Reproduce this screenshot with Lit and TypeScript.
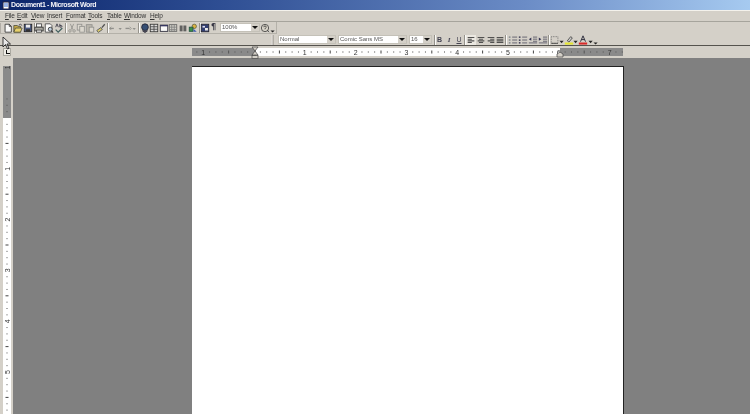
import { LitElement, html, css, svg, nothing } from "lit";
import { customElement } from "lit/decorators.js";

type Item = { k: string; x: number; w: number; t?: string };

const G = "#8a8a86";
const icons: Record<string, unknown> = {
  new: svg`<path d="M2.5 1.5h5l2.5 2.5v7h-7.5z" fill="#fff" stroke="#222"/><path d="M7.5 1.5v2.5h2.5" fill="none" stroke="#222"/>`,
  open: svg`<path d="M1 3h4l1 1h3v7H1z" fill="#c8a838" stroke="#443"/><path d="M3 6h8l-2 5H1z" fill="#e8d060" stroke="#443"/><path d="M7 2.5l2-1 2 1.5" fill="none" stroke="#223" />`,
  save: svg`<rect x="1.5" y="1.5" width="9" height="9" fill="#3c4c78" stroke="#111"/><rect x="3.5" y="2" width="5" height="3.5" fill="#eee"/><rect x="3.5" y="7.5" width="5" height="3" fill="#222"/>`,
  print: svg`<rect x="3" y="1" width="6" height="4" fill="#fff" stroke="#333"/><rect x="1" y="5" width="10" height="4.5" fill="#a8a8a0" stroke="#222"/><rect x="3" y="8.5" width="6" height="2.5" fill="#fff" stroke="#333"/>`,
  preview: svg`<path d="M1.5 1h6l2 2v8h-8z" fill="#fff" stroke="#333"/><circle cx="7.5" cy="7.5" r="2.4" fill="#bcd" stroke="#222"/><path d="M9 9.5l2 2" stroke="#222" stroke-width="1.4"/>`,
  spell: svg`<path d="M2 5l1.6-4 1.6 4M7 1v4h1.6a1 1 0 0 0 0-2H7" fill="none" stroke="#223" /><path d="M2 8l3 3 5-5" fill="none" stroke="#355" stroke-width="1.5"/>`,
  cut: svg`<path d="M4 1l3 7M8 1L5 8" stroke="${G}" fill="none"/><circle cx="3.5" cy="9.5" r="1.5" fill="none" stroke="${G}"/><circle cx="8.5" cy="9.5" r="1.5" fill="none" stroke="${G}"/>`,
  copy: svg`<rect x="1.5" y="1.5" width="5.5" height="7" fill="#ddd9d0" stroke="${G}"/><rect x="4.5" y="4" width="5.5" height="7" fill="#ddd9d0" stroke="${G}"/>`,
  paste: svg`<rect x="1.5" y="2" width="7" height="9" fill="#b8b4aa" stroke="${G}"/><rect x="5" y="5" width="5.5" height="6" fill="#ddd9d0" stroke="${G}"/>`,
  painter: svg`<rect x="1" y="7" width="6" height="3" transform="rotate(-35 4 8)" fill="#d8c860" stroke="#555"/><path d="M7 5.5L10.5 1.5" stroke="#444" stroke-width="1.6"/>`,
  undo: svg`<path d="M2 6.5h5" stroke="${G}" stroke-width="1.6"/><path d="M4 4.5l-2 2 2 2" fill="none" stroke="${G}"/>`,
  redo: svg`<path d="M3 6.5h5" stroke="${G}" stroke-width="1.6"/><path d="M8 4.5l2 2-2 2" fill="none" stroke="${G}"/>`,
  arrow: svg`<path d="M3 7h5l-2.500 3z" fill="#111"/>`,
  greyarrow: svg`<path d="M3 6h4l-2 2.500z" fill="${G}"/>`,
  link: svg`<circle cx="6" cy="5" r="4" fill="#24406a" stroke="#112"/><path d="M3 9l3 2 3-2" fill="none" stroke="#223" stroke-width="1.5"/>`,
  tables: svg`<rect x="1.5" y="1.5" width="9" height="9" fill="#ddd" stroke="#222"/><path d="M1.5 4.5h9M1.5 7.5h9M6 1.5v9" stroke="#333"/>`,
  table: svg`<rect x="1.5" y="2.5" width="9" height="7.5" fill="#fff" stroke="#112"/><rect x="1.5" y="2.5" width="9" height="1.5" fill="#225"/>`,
  excel: svg`<rect x="1.5" y="2" width="9" height="8" fill="#d0d0c8" stroke="#555"/><path d="M1.5 5h9M1.5 8h9M4.5 2v8M7.5 2v8" stroke="#777"/>`,
  cols: svg`<rect x="2" y="3" width="3.5" height="7" fill="#555"/><rect x="6.5" y="3" width="3.5" height="7" fill="#555"/>`,
  draw: svg`<circle cx="7.5" cy="4" r="2.6" fill="#e0b030" stroke="#553"/><rect x="1.5" y="5" width="4.5" height="5" fill="#2a8a3a" stroke="#143"/><path d="M6.5 7l4 3.5h-4z" fill="#3050b0"/>`,
  docmap: svg`<rect x="1.5" y="1.5" width="9" height="9" fill="#22306a" stroke="#112"/><rect x="3" y="3.5" width="3" height="2" fill="#dde"/><rect x="6" y="6" width="3.5" height="3" fill="#eee"/>`,
  help: svg`<circle cx="6" cy="6" r="4.4" fill="#d8d4c8" stroke="#333"/><path d="M4.5 5c0-2 3-2 3 0 0 1-1.500 1-1.500 2.500" fill="none" stroke="#222"/><path d="M8.500 8.500l2.500 2.500" stroke="#333"/>`,
  more: svg`<path d="M3 9h5l-2.500 2.500z" fill="#111"/>`,
  grip: svg`<path d="M1.500 0v12" stroke="#fff"/><path d="M2.500 0v12" stroke="#85827a"/>`,
  left: svg`<rect x="0" y="0" width="12" height="12" fill="#eeebe4"/><path d="M2 3h8M2 5h5M2 7h8M2 9h5" stroke="#444" stroke-width="1.300"/>`,
  center: svg`<path d="M2 3h8M3.500 5h5M2 7h8M3.500 9h5" stroke="#444" stroke-width="1.300"/>`,
  right: svg`<path d="M2 3h8M5 5h5M2 7h8M5 9h5" stroke="#444" stroke-width="1.300"/>`,
  just: svg`<path d="M2 3h8M2 5h8M2 7h8M2 9h8" stroke="#444" stroke-width="1.300"/>`,
  numb: svg`<path d="M1 2.500h2M1 6h2M1 9.500h2" stroke="#345"/><path d="M5 2.500h6M5 6h6M5 9.500h6" stroke="#445"/>`,
  bull: svg`<path d="M1 2.500h2M1 6h2M1 9.500h2" stroke="#113" stroke-width="1.500"/><path d="M5 2.500h6M5 6h6M5 9.500h6" stroke="#445"/>`,
  outdent: svg`<path d="M6 2.500h5M6 5h5M6 7.500h5M1 9.500h10" stroke="#445"/><path d="M4 3L1 5l3 2z" fill="#224"/>`,
  indent: svg`<path d="M6 2.500h5M6 5h5M6 7.500h5M1 9.500h10" stroke="#445"/><path d="M1 3l3 2-3 2z" fill="#224"/>`,
  border: svg`<rect x="1.500" y="2" width="8" height="8" fill="none" stroke="#555" stroke-dasharray="1 1"/><path d="M1.500 10h8" stroke="#333"/>`,
  high: svg`<path d="M4 7l4-5 2 1.500-4 5z" fill="#ccc" stroke="#333"/><rect x="1" y="9" width="10" height="2.500" fill="#e6e820"/>`,
  color: svg`<path d="M3 8l3-7 3 7M4.200 5.500h3.600" fill="none" stroke="#223" stroke-width="1.200"/><rect x="1" y="9" width="10" height="2.500" fill="#d81818"/>`,
};

const standard: Item[] = [
  { k: "grip", x: 3, w: 4 },
  { k: "new", x: 8, w: 10 }, { k: "open", x: 17.5, w: 10 }, { k: "save", x: 27.5, w: 10 },
  { k: "sep", x: 34.5, w: 2 },
  { k: "print", x: 39, w: 10 }, { k: "preview", x: 49, w: 10 }, { k: "spell", x: 58.5, w: 10 },
  { k: "sep", x: 65.5, w: 2 },
  { k: "cut", x: 71.5, w: 10 }, { k: "copy", x: 80.5, w: 10 }, { k: "paste", x: 90, w: 10 }, { k: "painter", x: 101, w: 10 },
  { k: "sep", x: 107.5, w: 2 },
  { k: "undo", x: 113, w: 10 }, { k: "greyarrow", x: 121, w: 6 }, { k: "redo", x: 128, w: 8 }, { k: "greyarrow", x: 135, w: 6 },
  { k: "sep", x: 138.5, w: 1 },
  { k: "link", x: 144.5, w: 10 }, { k: "tables", x: 154, w: 9 }, { k: "table", x: 163.5, w: 10 }, { k: "excel", x: 173, w: 9 }, { k: "cols", x: 182.5, w: 9 }, { k: "draw", x: 193, w: 10 },
  { k: "sep", x: 199.5, w: 2 },
  { k: "docmap", x: 205, w: 9 }, { k: "para", x: 213.5, w: 8 },
  { k: "combo", x: 240, w: 40, t: "100%" },
  { k: "help", x: 265, w: 10 }, { k: "more", x: 273, w: 6 },
];
const format: Item[] = [
  { k: "grip", x: 275.5, w: 4 },
  { k: "combo", x: 307, w: 58, t: "Normal" }, { k: "combo", x: 372.500, w: 69, t: "Comic Sans MS" }, { k: "combo", x: 420.500, w: 23, t: "16" },
  { k: "sep", x: 434.500, w: 2 },
  { k: "B", x: 439.500, w: 8 }, { k: "I", x: 449, w: 8 }, { k: "U", x: 459, w: 8 },
  { k: "sep", x: 464.500, w: 2 },
  { k: "left", x: 471, w: 10 }, { k: "center", x: 480.500, w: 9 }, { k: "right", x: 490.500, w: 9 }, { k: "just", x: 500, w: 9 },
  { k: "sep", x: 506, w: 2 },
  { k: "numb", x: 512.500, w: 9 }, { k: "bull", x: 522.500, w: 9 }, { k: "outdent", x: 533, w: 9 }, { k: "indent", x: 542.500, w: 9 },
  { k: "sep", x: 548.500, w: 2 },
  { k: "border", x: 554.500, w: 9 }, { k: "arrow", x: 561.500, w: 5 }, { k: "high", x: 568.500, w: 9 }, { k: "arrow", x: 576, w: 5 }, { k: "color", x: 583, w: 9 }, { k: "arrow", x: 590.500, w: 5 }, { k: "more", x: 595.500, w: 5 },
];
const menus = [
  ["F", "ile", 5], ["E", "dit", 17], ["V", "iew", 31], ["I", "nsert", 47], ["F", "ormat", 66],
  ["T", "ools", 88], ["T", "able", 107], ["W", "indow", 124], ["H", "elp", 150],
] as const;

const INCH = 50.8;

@customElement("app-root")
export class AppRoot extends LitElement {
  static styles = css`
    :host { display: block; width: 750px; height: 414px; overflow: hidden; position: relative; background: #d4d0c8; font-family: "Liberation Sans", Arial, sans-serif; color: #111; }
    .title { height: 10px; display: flex; align-items: center; gap: 1px; padding-left: 2px; background: linear-gradient(90deg, #0a246a 0%, #2f4f94 30%, #6b8cc6 70%, #a6caf0 100%); color: #f4f4f8; font-size: 7px; letter-spacing: -0.4px; font-weight: 700; line-height: 10px; white-space: nowrap; }
    .title svg { width: 8px; height: 9px; flex: none; }
    .title span { filter: blur(0.25px); }
    .hi { height: 1px; background: #f4f2ec; }
    .menu { height: 10px; display: flex; font-size: 6.5px; letter-spacing: -0.2px; line-height: 10px; color: #333; border-bottom: 1px solid #a6a49c; filter: blur(0.2px); }
    .menu span.m { white-space: nowrap; }
    .menu u { text-decoration: underline; }
    .bar { box-sizing: border-box; width: 277px; height: 12px; display: flex; align-items: center; border-bottom: 1px solid #b4b1a9; border-right: 1px solid #b4b1a9; }
    .tb2 { height: 11px; margin-top: 0; display: flex; align-items: center; }
    .dark { height: 1px; background: #55534e; }
    .it { flex: none; height: 10px; display: flex; align-items: center; justify-content: center; filter: blur(0.3px); opacity: 0.9; }
    .it svg { width: 10px; height: 10px; flex: none; display: block; }
    .sep { width: 2px; height: 10px; border-left: 1px solid #8f8c84; border-right: 1px solid #fff; box-sizing: border-box; }
    .para { font-size: 8px; font-weight: 700; color: #223; font-family: "DejaVu Sans", sans-serif; }
    .fmt { font-size: 7px; font-weight: 700; color: #334; }
    .fmt.i { font-style: italic; font-family: "Liberation Serif", serif; }
    .fmt.u { text-decoration: underline; font-weight: 400; }
    .combo { box-sizing: border-box; height: 9px; flex: none; background: #fff; border: 1px solid #c4c1b8; display: flex; justify-content: space-between; align-items: stretch; font-size: 6px; line-height: 7px; color: #555; padding-left: 1px; white-space: nowrap; overflow: hidden; filter: blur(0.2px); }
    .combo b { flex: none; width: 8px; background: #d4d0c8; display: flex; align-items: center; justify-content: center; }
    .combo b::after { content: ""; border: 3px solid transparent; border-top-color: #111; border-bottom: 0; }
    .rulerRow { height: 12px; display: flex; position: relative; }
    .tab { width: 8px; height: 8px; margin: 2px 0 0 3px; background: #eeece6; border: 1px solid #aaa8a0; box-sizing: border-box; display: flex; }
    .tab::after { content: ""; width: 3px; height: 3px; margin: 1px 0 0 2px; border-left: 1px solid #111; border-bottom: 1px solid #111; }
    .hruler { display: block; margin: 2px 0 0 181px; overflow: visible; filter: blur(0.25px); }
    .main { height: 356px; display: flex; }
    .side { width: 13px; flex: none; padding: 8px 2px 0 3px; box-sizing: border-box; }
    .side svg { display: block; filter: blur(0.25px); }
    .work { flex: 1; background: #808080; padding: 8px 0 0 179px; }
    .page { width: 431px; height: 360px; background: #fff; border: solid #222; border-width: 1px 1px 0 0; }
    .pointer { position: absolute; left: 2px; top: 37px; width: 9px; height: 14px; }
    text { font-family: "Liberation Sans", Arial, sans-serif; }
  `;

  private row(items: Item[]) {
    let end = 0;
    return items.map((it) => {
      const left = it.x - it.w / 2;
      const m = left - end;
      end = left + it.w;
      const st = `margin-left:${m}px;width:${it.w}px`;
      if (it.k === "combo") return html`<div class="combo" style=${st}><span>${it.t}</span><b></b></div>`;
      if (it.k === "sep") return html`<div class="it" style=${st}><div class="sep"></div></div>`;
      if (it.k === "para") return html`<div class="it para" style=${st}>¶</div>`;
      if (it.k === "B" || it.k === "I" || it.k === "U")
        return html`<div class="it fmt ${it.k.toLowerCase()}" style=${st}>${it.k}</div>`;
      return html`<div class="it" style=${st}><svg viewBox="0 0 12 12">${icons[it.k] ?? nothing}</svg></div>`;
    });
  }

  private hruler() {
    const origin = 254 - 192;
    const ticks = [];
    for (let i = -10; i <= 58; i++) {
      if (i % 8 === 0) continue;
      const x = origin + (i * INCH) / 8;
      if (x < 1 || x > 431) continue;
      const c = x < origin || x > 368 ? "#555" : "#444";
      ticks.push(i % 4 === 0
        ? svg`<rect x=${x - 0.5} y="2.500" width="1" height="3" fill=${c}/>`
        : svg`<rect x=${x - 0.5} y="3.500" width="1" height="1" fill=${c}/>`);
    }
    const nums = [-1, 1, 2, 3, 4, 5, 6, 7].map((n) =>
      svg`<text x=${origin + n * INCH} y="6.500" font-size="7" text-anchor="middle" fill="#333">${Math.abs(n)}</text>`);
    return html`<svg class="hruler" width="431" height="8" viewBox="0 0 431 8">
      <rect width="431" height="8" fill="#8a8a8a"/>
      <rect x="64" width="304" height="8" fill="#fff"/>
      ${ticks}${nums}
      <path d="M60 -1h6l-3 4zM60 7l3-4 3 4z" fill="#d4d0c8" stroke="#444" stroke-width=".7"/>
      <rect x="60" y="7.500" width="6" height="3" fill="#d4d0c8" stroke="#444" stroke-width=".7"/>
      <path d="M365 9v-3l3-2 3 2v3z" fill="#d4d0c8" stroke="#444" stroke-width=".7"/>
    </svg>`;
  }

  private vruler() {
    const origin = 52;
    const ticks = [];
    for (let i = -3; i <= 48; i++) {
      if (i % 8 === 0) continue;
      const y = origin + (i * INCH) / 8;
      if (y < 1) continue;
      ticks.push(i % 4 === 0
        ? svg`<rect x="2.500" y=${y - 0.5} width="3" height="1" fill="#444"/>`
        : svg`<rect x="3.500" y=${y - 0.5} width="1" height="1" fill="#555"/>`);
    }
    const nums = [-1, 1, 2, 3, 4, 5].map((n) => {
      const y = origin + n * INCH;
      return svg`<text transform="translate(6.500 ${y}) rotate(-90)" font-size="7" text-anchor="middle" fill="#333">${Math.abs(n)}</text>`;
    });
    return html`<svg width="8" height="348" viewBox="0 0 8 348">
      <rect width="8" height="348" fill="#fff"/>
      <rect width="8" height="52" fill="#8a8a8a"/>
      ${ticks}${nums}
    </svg>`;
  }

  render() {
    return html`
      <div class="title">
        <svg viewBox="0 0 8 9"><rect x="1" y="1" width="6" height="7" fill="#fff" stroke="#224"/><path d="M2 3h4M2 5h4" stroke="#36c"/></svg>
        <span>Document1 - Microsoft Word</span>
      </div>
      <div class="hi"></div>
      <div class="menu">
        ${(() => { let end = 0; return menus.map(([a, b, x]) => {
          const m = x - end; end = x;
          return html`<span class="m" style="margin-left:${m}px;width:0"><u>${a}</u>${b}</span>`;
        }); })()}
      </div>
      <div class="bar">${this.row(standard)}</div>
      <div class="tb2">${this.row(format)}</div>
      <div class="dark"></div>
      <div class="rulerRow"><div class="tab"></div>${this.hruler()}</div>
      <div class="main">
        <div class="side">${this.vruler()}</div>
        <div class="work"><div class="page"></div></div>
      </div>
      <svg class="pointer" viewBox="0 0 9 14"><path d="M1 0v10l2.500-2.500 2 4.500 1.500-.7-2-4.300h3.500z" fill="#e8e8e8" stroke="#111" stroke-width=".8"/></svg>
    `;
  }
}
